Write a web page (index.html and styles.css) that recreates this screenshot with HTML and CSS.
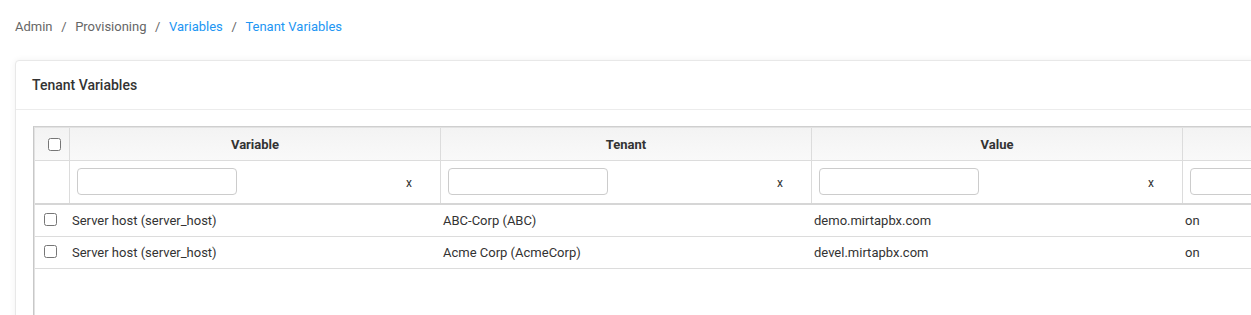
FILE: index.html
```html
<!DOCTYPE html>
<html lang="en">
  <head>
    <meta charset="UTF-8" />
    <meta name="viewport" content="width=device-width, initial-scale=1.0" />
    <title>Tenant Variables</title>
    <link rel="stylesheet" href="styles.css">
  </head>
  <body>
    <div class="page">
      <nav class="breadcrumb">
        <span class="crumb">Admin</span>
        <span class="sep">/</span>
        <span class="crumb">Provisioning</span>
        <span class="sep">/</span>
        <a class="crumb link" href="#">Variables</a>
        <span class="sep">/</span>
        <a class="crumb link" href="#">Tenant Variables</a>
      </nav>

      <div class="card">
        <div class="card-header">Tenant Variables</div>
        <div class="card-body">
          <div class="grid">
            <div class="grid-row header-row">
              <div class="cell check-cell"><input type="checkbox" /></div>
              <div class="cell head-cell">Variable</div>
              <div class="cell head-cell">Tenant</div>
              <div class="cell head-cell">Value</div>
              <div class="cell head-cell"></div>
            </div>
            <div class="grid-row filter-row">
              <div class="cell check-cell"></div>
              <div class="cell filter-cell"><input type="text" /><span class="clear">x</span></div>
              <div class="cell filter-cell"><input type="text" /><span class="clear">x</span></div>
              <div class="cell filter-cell"><input type="text" /><span class="clear">x</span></div>
              <div class="cell filter-cell"><input type="text" /><span class="clear">x</span></div>
            </div>
            <div class="grid-row data-row">
              <div class="cell check-cell"><input type="checkbox" /></div>
              <div class="cell">Server host (server_host)</div>
              <div class="cell">ABC-Corp (ABC)</div>
              <div class="cell">demo.mirtapbx.com</div>
              <div class="cell">on</div>
            </div>
            <div class="grid-row data-row">
              <div class="cell check-cell"><input type="checkbox" /></div>
              <div class="cell">Server host (server_host)</div>
              <div class="cell">Acme Corp (AcmeCorp)</div>
              <div class="cell">devel.mirtapbx.com</div>
              <div class="cell">on</div>
            </div>
          </div>
        </div>
      </div>
    </div>
  </body>
</html>
```

FILE: styles.css
```css
html,
body {
  margin: 0;
  background: #ffffff;
  font-family: Roboto, "Liberation Sans", sans-serif;
  font-size: 13px;
  color: #333333;
  overflow: hidden;
}

.page {
  padding: 18px 0 0 15px;
}

/* Breadcrumb */
.breadcrumb {
  display: flex;
  align-items: center;
  height: 18px;
  line-height: 18px;
}

.crumb {
  color: #666666;
  text-decoration: none;
}

.crumb.link {
  color: #2196f3;
}

.sep {
  color: #666666;
  padding: 0 8.6px;
}

/* Card */
.card {
  margin-top: 24px;
  width: 1320px;
  background: #ffffff;
  border: 1px solid #e8e8e8;
  border-radius: 4px 0 0 0;
  box-shadow: 0 0 6px rgba(0, 0, 0, 0.06);
}

.card-header {
  height: 48px;
  line-height: 48px;
  padding-left: 16px;
  font-size: 14px;
  font-weight: 500;
  color: #333333;
  border-bottom: 1px solid #ececec;
}

.card-body {
  padding: 16px 0 0 17px;
}

/* Grid */
.grid {
  width: 1300px;
  height: 230px;
  border-top: 1px solid #cfcfcf;
  border-left: 1px solid #c8c8c8;
  box-shadow: inset 1px 1px 0 #e2e2e2;
  padding: 1px 0 0 1px;
}

.grid-row {
  display: grid;
  grid-template-columns: 34px 371px 371px 371px 150px;
}

.cell {
  display: flex;
  align-items: center;
  padding-left: 3px;
  white-space: nowrap;
}

.header-row {
  height: 32px;
  background: linear-gradient(#f3f3f3, #f9f9f9);
  border-bottom: 1px solid #dcdcdc;
}

.head-cell {
  justify-content: center;
  font-weight: 700;
  border-left: 1px solid #dcdcdc;
  padding-left: 0;
}

.filter-row {
  height: 42px;
  border-bottom: 2px solid #d6d6d6;
}

.filter-row .cell {
  border-left: 1px solid #dcdcdc;
}

.filter-row .check-cell {
  border-left: none;
}

.filter-cell {
  justify-content: space-between;
  padding: 0 28px 0 7px;
}

.filter-cell input {
  width: 160px;
  height: 27px;
  box-sizing: border-box;
  border: 1px solid #cccccc;
  border-radius: 4px;
  margin: 0 0 1px;
}

.clear {
  font-size: 12px;
  color: #333333;
  margin-top: 1px;
}

.check-cell {
  justify-content: center;
  padding-left: 0;
}

.check-cell input {
  width: 13px;
  height: 13px;
  margin: 0 0 0 4px;
}

.data-row {
  height: 31px;
  border-bottom: 1px solid #dcdcdc;
}

.data-row .check-cell input {
  margin: 0 4px 2px 0;
}
```
